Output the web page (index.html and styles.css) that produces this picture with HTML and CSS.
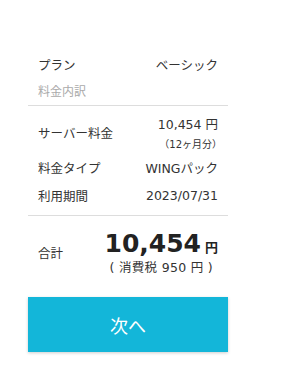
FILE: index.html
```html
<html>

<head>
    <title>Order Summary</title>
    <link rel="stylesheet" href="styles.css">
</head>

<body>
    <div class="summary">
        <div class="row plan">
            <span>プラン</span>
            <span>ベーシック</span>
        </div>
        <div class="caption">料金内訳</div>

        <div class="block">
            <div class="row server">
                <span>サーバー料金</span>
                <div class="price">
                    <div>10,454 円</div>
                    <div class="months">（12ヶ月分）</div>
                </div>
            </div>
            <div class="row">
                <span>料金タイプ</span>
                <span>WINGパック</span>
            </div>
            <div class="row last">
                <span>利用期間</span>
                <span>2023/07/31</span>
            </div>
        </div>

        <div class="total">
            <span>合計</span>
            <div class="total-price">
                <div class="amount">10,454<span class="yen">円</span></div>
                <div class="tax">( 消費税 950 円 )</div>
            </div>
        </div>

        <button class="next">次へ</button>
    </div>
</body>

</html>
```

FILE: styles.css
```css
body {
    margin: 0;
    font-family: "DejaVu Sans", "Noto Sans CJK JP", sans-serif;
    color: #333;
    background: #fff;
}

.summary {
    width: 200px;
    margin-left: 28px;
    padding-top: 55px;
}

.row {
    display: flex;
    justify-content: space-between;
    align-items: center;
    font-size: 12.5px;
    padding: 0 10px;
    height: 27px;
}

.plan {
    height: 18px;
}

.caption {
    color: #aaa;
    font-size: 12px;
    margin-top: 9px;
    padding: 0 10px 6px;
    border-bottom: 1px solid #ddd;
}

.block {
    padding-top: 4px;
    padding-bottom: 6px;
    border-bottom: 1px solid #ddd;
}

.server {
    height: 44px;
}

.last {
    height: 28px;
}

.price {
    text-align: right;
}

.months {
    font-size: 10px;
    margin-top: 3px;
    margin-right: -4px;
}

.total {
    display: flex;
    justify-content: space-between;
    align-items: center;
    font-size: 12.5px;
    padding: 13px 10px 0;
}

.total-price {
    text-align: center;
}

.amount {
    font-size: 25px;
    font-weight: bold;
    color: #222;
}

.yen {
    font-size: 13px;
    margin-left: 4px;
}

.tax {
    font-size: 12.5px;
    letter-spacing: 0.3px;
    margin-top: -1px;
}

.next {
    display: block;
    width: 200px;
    height: 55px;
    margin-top: 21px;
    border: none;
    background-color: #13b6d9;
    color: #fff;
    font-family: "Noto Sans CJK JP", sans-serif;
    font-size: 18px;
    box-shadow: 0 1px 3px rgba(0, 0, 0, 0.2);
}
```
